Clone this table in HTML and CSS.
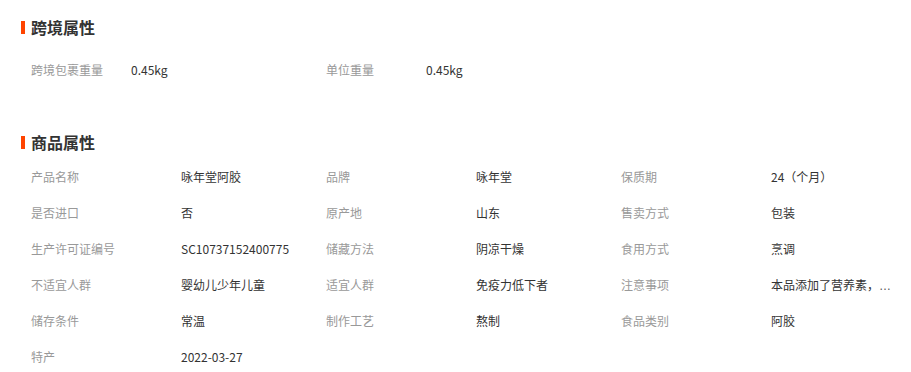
FILE: index.html
```html
<!DOCTYPE html>
<html lang="zh-CN">
<head>
<meta charset="utf-8">
<link rel="stylesheet" href="styles.css">
</head>
<body>
<div class="page">
  <section class="section section-cross">
    <h2 class="title"><span class="bar"></span>跨境属性</h2>
    <div class="grid grid-cross">
      <div class="item"><span class="label">跨境包裹重量</span><span class="value">0.45kg</span></div>
      <div class="item"><span class="label">单位重量</span><span class="value">0.45kg</span></div>
    </div>
  </section>
  <section class="section section-goods">
    <h2 class="title"><span class="bar"></span>商品属性</h2>
    <div class="grid grid-goods">
      <div class="item"><span class="label">产品名称</span><span class="value">咏年堂阿胶</span></div>
      <div class="item"><span class="label">品牌</span><span class="value">咏年堂</span></div>
      <div class="item"><span class="label">保质期</span><span class="value">24（个月）</span></div>
      <div class="item"><span class="label">是否进口</span><span class="value">否</span></div>
      <div class="item"><span class="label">原产地</span><span class="value">山东</span></div>
      <div class="item"><span class="label">售卖方式</span><span class="value">包装</span></div>
      <div class="item"><span class="label">生产许可证编号</span><span class="value">SC10737152400775</span></div>
      <div class="item"><span class="label">储藏方法</span><span class="value">阴凉干燥</span></div>
      <div class="item"><span class="label">食用方式</span><span class="value">烹调</span></div>
      <div class="item"><span class="label">不适宜人群</span><span class="value">婴幼儿少年儿童</span></div>
      <div class="item"><span class="label">适宜人群</span><span class="value">免疫力低下者</span></div>
      <div class="item"><span class="label">注意事项</span><span class="value">本品添加了营养素，<span class="ellipsis">…</span></span></div>
      <div class="item"><span class="label">储存条件</span><span class="value">常温</span></div>
      <div class="item"><span class="label">制作工艺</span><span class="value">熬制</span></div>
      <div class="item"><span class="label">食品类别</span><span class="value">阿胶</span></div>
      <div class="item"><span class="label">特产</span><span class="value">2022-03-27</span></div>
    </div>
  </section>
</div>
</body>
</html>
```
FILE: styles.css
```css
* { box-sizing: border-box; }
html, body { margin: 0; padding: 0; background: #fff; }
body {
  font-family: "Noto Sans CJK SC", "Noto Sans", sans-serif;
  font-size: 12px;
  color: #333;
}
.page { padding: 17px 0 0 21px; width: 911px; }
.title {
  display: flex;
  align-items: center;
  margin: 0;
  height: 20px;
  font-size: 16px;
  font-weight: bold;
  color: #333;
  line-height: 20px;
}
.bar {
  display: inline-block;
  width: 4px;
  height: 13px;
  background: #ff4400;
  margin-right: 6px;
}
.grid {
  display: grid;
  grid-template-columns: 295px 295px 280px;
  padding-left: 10px;
}
.section-cross .grid { margin-top: 15px; }
.section-goods { margin-top: 44px; }
.section-goods .grid { margin-top: 7px; }
.item {
  display: flex;
  height: 36px;
  line-height: 36px;
  white-space: nowrap;
  min-width: 0;
}
.label { color: #999; flex: 0 0 150px; }
.grid-cross .label { flex-basis: 100px; }
.value {
  color: #333;
  max-width: 130px;
  overflow: hidden;
  text-overflow: ellipsis;
}
.ellipsis { font-family: "Liberation Sans", sans-serif; color: #555; }
.grid-goods .item:nth-child(3n+1) .value,
.grid-goods .item:nth-child(3n+2) .value { max-width: 140px; }
```
